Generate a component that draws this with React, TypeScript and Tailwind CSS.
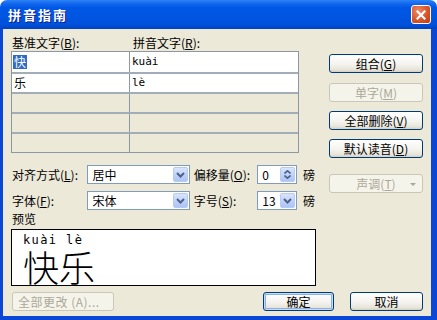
import clsx from 'clsx';
import type { ReactNode } from 'react';

const CJK = "font-['Noto_Sans_CJK_SC','Noto_Sans',sans-serif]";

function Acc({ k }: { k: string }) {
  return <span className="underline underline-offset-[1px]">{k}</span>;
}

function XpButton({
  children,
  disabled,
  isDefault,
  className,
}: {
  children: ReactNode;
  disabled?: boolean;
  isDefault?: boolean;
  className?: string;
}) {
  return (
    <div
      className={clsx(
        'flex h-[19px] items-center justify-center rounded-[3px] border text-[12px] leading-none',
        disabled
          ? 'border-[#c9c7ba] bg-[#f5f4ea] text-[#aca899]'
          : 'border-[#003c74] bg-[linear-gradient(#ffffff,#f4f3ee_55%,#e8e5da_85%,#d6d0c5)] text-black',
        isDefault && 'shadow-[inset_0_0_0_1px_#c6dbf6,inset_0_0_0_2px_#8cb0e6]',
        className,
      )}
    >
      {children}
    </div>
  );
}

function Chevron() {
  return (
    <svg width="9" height="6" viewBox="0 0 9 6">
      <path d="M1 1 L4.5 4.5 L8 1" fill="none" stroke="#4d6185" strokeWidth="2" />
    </svg>
  );
}

function DropBtn() {
  return (
    <div className="mr-[1px] flex h-[15px] w-[15px] items-center justify-center rounded-[2px] border border-[#b7caf3] bg-[linear-gradient(#d9e5fd,#bccffa_60%,#aec4f4)]">
      <Chevron />
    </div>
  );
}

function SelectBox({ value, className }: { value: string; className?: string }) {
  return (
    <div className={clsx('flex h-[19px] items-center border border-[#7f9db9] bg-white pl-[4px]', className)}>
      <span className="flex-1 text-[12px] leading-none">{value}</span>
      <DropBtn />
    </div>
  );
}

function Spinner() {
  return (
    <div className="flex h-[19px] w-[40px] items-center border border-[#7f9db9] bg-white pl-[4px]">
      <span className="flex-1 text-[12px] leading-none">0</span>
      <div className="mr-[1px] flex h-[15px] w-[15px] flex-col items-center justify-center gap-[1px] rounded-[2px] border border-[#b7caf3] bg-[linear-gradient(#d9e5fd,#bccffa_60%,#aec4f4)]">
        <svg width="7" height="4" viewBox="0 0 7 4">
          <path d="M0.5 3.5 L3.5 0.8 L6.5 3.5" fill="none" stroke="#4d6185" strokeWidth="1.6" />
        </svg>
        <svg width="7" height="4" viewBox="0 0 7 4">
          <path d="M0.5 0.5 L3.5 3.2 L6.5 0.5" fill="none" stroke="#4d6185" strokeWidth="1.6" />
        </svg>
      </div>
    </div>
  );
}

const ROWS = [
  { base: '快', ruby: 'kuài', white: true, sel: true },
  { base: '乐', ruby: 'lè', white: true },
  { base: '', ruby: '' },
  { base: '', ruby: '' },
  { base: '', ruby: '' },
];

export default function App() {
  return (
    <div className={clsx('flex h-[320px] w-[437px] flex-col text-black', CJK)}>
      {/* title bar */}
      <div className="flex h-[29px] items-center justify-between rounded-t-[7px] bg-[linear-gradient(#2a84f5_0%,#1a6cf0_10%,#0058e6_25%,#0055e1_60%,#0050da_85%,#0043c3_100%)] pl-[8px] pr-[6px]">
        <span className="text-[13px] font-bold tracking-[2px] text-white [text-shadow:1px_1px_0_#0a1e8a]">拼音指南</span>
        <div className="flex h-[19px] w-[20px] items-center justify-center rounded-[3px] border border-white bg-[radial-gradient(circle_at_35%_30%,#f08a64,#d9552c_55%,#bf3a12)]">
          <svg width="10" height="10" viewBox="0 0 10 10">
            <path d="M1.5 1.5 L8.5 8.5 M8.5 1.5 L1.5 8.5" stroke="white" strokeWidth="2.2" strokeLinecap="square" />
          </svg>
        </div>
      </div>

      {/* body */}
      <div className="flex flex-1 flex-col border-b-[4px] border-l-[3px] border-r-[6px] border-[#0b47d6] bg-[#ece9d8] px-[8px] text-[12px]">
        <div className="flex">
          {/* left column */}
          <div className="flex w-[304px] flex-col">
            <div className="mt-[7px] flex h-[14px] items-center leading-none">
              <span className="w-[122px] pl-[1px]">
                基准文字(<Acc k="B" />):
              </span>
              <span>
                拼音文字(<Acc k="R" />):
              </span>
            </div>
            <div className="mt-[1px] w-[288px] border border-[#8c98a4]">
              {ROWS.map((r, i) => (
                <div
                  key={i}
                  className={clsx(
                    'grid h-[20px] grid-cols-[118px_1fr]',
                    i > 0 && 'border-t-[2px] border-[#a3adb8]',
                    r.white ? 'bg-white' : 'bg-[#ece9d8]',
                  )}
                >
                  <div className="flex items-center border-r border-[#8c98a4] pl-[1px]">
                    {r.base && (
                      <span className={clsx('px-[1px] leading-[14px]', r.sel && 'bg-[#316ac5] text-white')}>{r.base}</span>
                    )}
                  </div>
                  <div className="flex items-center pl-[2px] font-['DejaVu_Sans_Mono',monospace] text-[11px]">{r.ruby}</div>
                </div>
              ))}
            </div>

            <div className="mt-[12px] flex h-[19px] items-center">
              <span className="w-[77px] pl-[1px] leading-none">
                对齐方式(<Acc k="L" />):
              </span>
              <SelectBox value="居中" className="w-[103px]" />
              <span className="ml-[4px] w-[64px] leading-none">
                偏移量(<Acc k="O" />):
              </span>
              <Spinner />
              <span className="ml-[6px] leading-none">磅</span>
            </div>
            <div className="mt-[7px] flex h-[19px] items-center">
              <span className="w-[77px] pl-[1px] leading-none">
                字体(<Acc k="F" />):
              </span>
              <SelectBox value="宋体" className="w-[103px]" />
              <span className="ml-[4px] w-[64px] leading-none">
                字号(<Acc k="S" />):
              </span>
              <SelectBox value="13" className="w-[40px]" />
              <span className="ml-[6px] leading-none">磅</span>
            </div>

            <div className="mt-[2px] flex h-[14px] items-center pl-[1px] leading-none">预览</div>
            <div className="mt-[3px] flex h-[57px] w-[305px] flex-col border border-black bg-white pl-[11px]">
              <div className="mt-[4px] h-[12px] font-['DejaVu_Sans_Mono',monospace] text-[12px] leading-[12px] tracking-[1.4px]">
                kuài lè
              </div>
              <div className="mt-[2px] h-[36px] text-[36px] font-light leading-[36px]">快乐</div>
            </div>
          </div>

          {/* right column */}
          <div className="ml-[14px] flex w-[94px] flex-col">
            <XpButton className="mt-[25px]">
              组合(<Acc k="G" />)
            </XpButton>
            <XpButton disabled className="mt-[10px]">
              单字(<Acc k="M" />)
            </XpButton>
            <XpButton className="mt-[9px]">
              全部删除(<Acc k="V" />)
            </XpButton>
            <XpButton className="mt-[9px]">
              默认读音(<Acc k="D" />)
            </XpButton>
            <XpButton disabled className="relative mt-[16px]">
              声调(<Acc k="T" />)
              <svg className="absolute right-[6px] top-[8px]" width="6" height="3" viewBox="0 0 6 3">
                <path d="M0 0 H6 L3 3 Z" fill="#aca899" />
              </svg>
            </XpButton>
          </div>
        </div>

        {/* bottom buttons */}
        <div className="mt-[6px] flex items-center">
          <XpButton disabled className="ml-[1px] w-[102px] justify-start pl-[5px] tracking-[0.5px]">
            全部更改 (A)...
          </XpButton>
          <div className="flex-1" />
          <XpButton isDefault className="w-[71px]">
            确定
          </XpButton>
          <XpButton className="ml-[16px] w-[73px]">取消</XpButton>
        </div>
      </div>
    </div>
  );
}
